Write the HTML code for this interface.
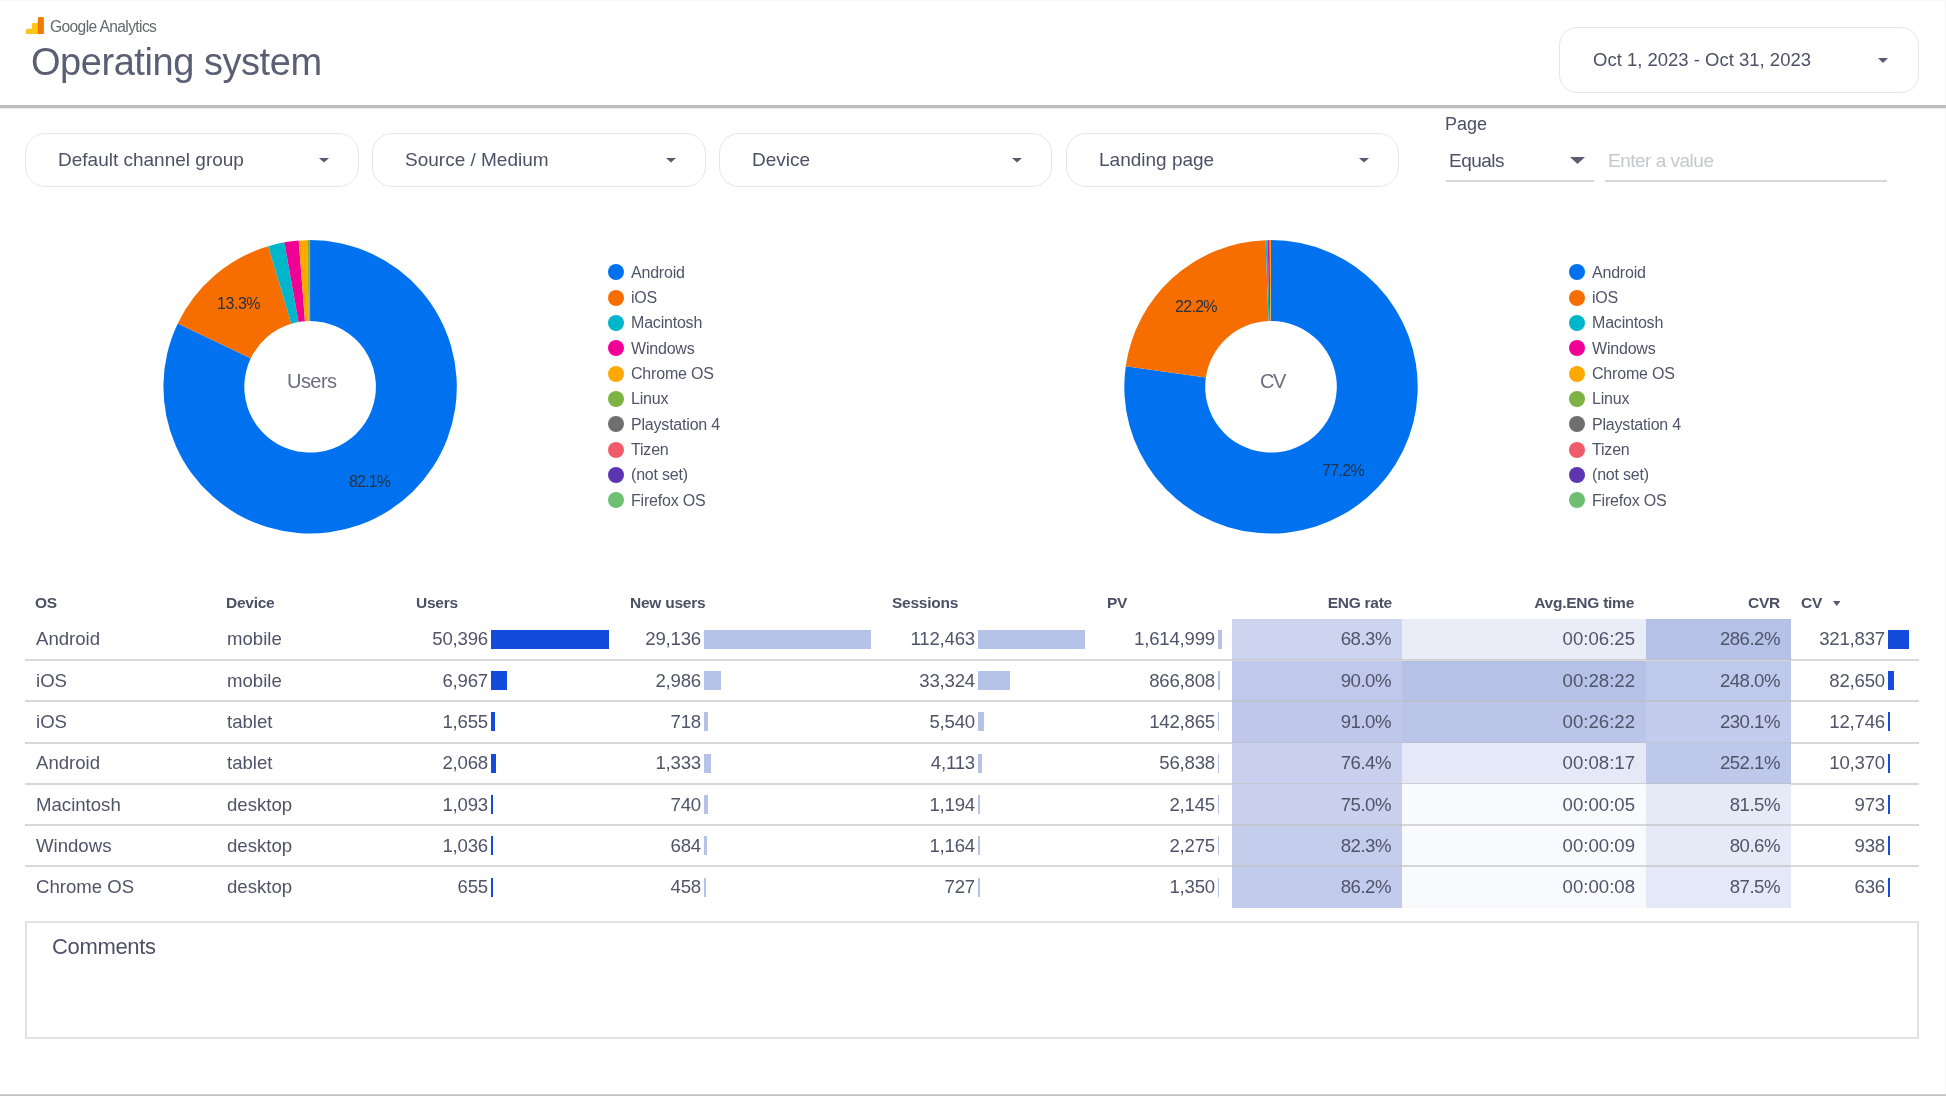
<!DOCTYPE html>
<html><head><meta charset="utf-8"><style>
html,body{margin:0;padding:0;background:#fff;width:1946px;height:1096px;overflow:hidden}
body{position:relative;font-family:"Liberation Sans", sans-serif}
.t{position:absolute;white-space:nowrap;-webkit-font-smoothing:antialiased;will-change:transform}
.r{position:absolute;display:block}
</style></head><body>
<div class="r" style="left:0.00px;top:0.00px;width:1946.00px;height:1.00px;background:#f8f8f8"></div>
<div class="r" style="left:1945.00px;top:0.00px;width:1.00px;height:1096.00px;background:#f6f6f6"></div>
<div class="r" style="left:0.00px;top:1093.50px;width:1946.00px;height:2.50px;background:linear-gradient(#d8d8d8,#bababa)"></div>
<svg class="r" style="left:26px;top:16.75px;width:18px;height:17.6px" viewBox="0 0 18 17.6">
<rect x="0" y="11.65" width="7.5" height="5.95" rx="1.5" fill="#fdc11b"/>
<rect x="5.9" y="5.95" width="7" height="11.65" rx="0.8" fill="#fdc515"/>
<rect x="11.9" y="0" width="6" height="17.6" rx="1.5" fill="#f57c00"/>
<rect x="11.9" y="3" width="1.6" height="14.6" fill="#ea730a"/>
</svg>
<div class="t" style="left:49.80px;top:18.99px;font-size:15.6px;line-height:15.6px;color:#65686c;font-weight:400;letter-spacing:-0.62px">Google Analytics</div>
<div class="t" style="left:31.00px;top:42.83px;font-size:38px;line-height:38px;color:#5b5f73;font-weight:400;letter-spacing:-0.45px">Operating system</div>
<div class="r" style="left:0.00px;top:105.00px;width:1946.00px;height:2.60px;background:#bdbdbd;box-shadow:0 1px 1px rgba(0,0,0,0.08)"></div>
<div class="r" style="left:1559.20px;top:26.70px;width:359.60px;height:66.40px;border:1.8px solid #e6e6e8;border-radius:18px;box-sizing:border-box"></div>
<div class="t" style="left:1593.00px;top:50.84px;font-size:18.5px;line-height:18.5px;color:#4d5166;font-weight:400;">Oct 1, 2023 - Oct 31, 2023</div>
<svg class="r" style="left:1878.00px;top:58.00px;width:10px;height:5px" viewBox="0 0 10 5"><path d="M0 0L10 0L5.0 5Z" fill="#555a6e"/></svg>
<div class="r" style="left:25.20px;top:133.20px;width:334.00px;height:53.80px;border:1.8px solid #e6e6e8;border-radius:20px;box-sizing:border-box"></div>
<div class="t" style="left:57.80px;top:150.42px;font-size:19px;line-height:19px;color:#4d5166;font-weight:400;">Default channel group</div>
<svg class="r" style="left:318.90px;top:158.00px;width:10px;height:4.6px" viewBox="0 0 10 4.6"><path d="M0 0L10 0L5.0 4.6Z" fill="#555a6e"/></svg>
<div class="r" style="left:372.00px;top:133.20px;width:334.00px;height:53.80px;border:1.8px solid #e6e6e8;border-radius:20px;box-sizing:border-box"></div>
<div class="t" style="left:404.60px;top:150.42px;font-size:19px;line-height:19px;color:#4d5166;font-weight:400;">Source / Medium</div>
<svg class="r" style="left:665.70px;top:158.00px;width:10px;height:4.6px" viewBox="0 0 10 4.6"><path d="M0 0L10 0L5.0 4.6Z" fill="#555a6e"/></svg>
<div class="r" style="left:719.20px;top:133.20px;width:332.80px;height:53.80px;border:1.8px solid #e6e6e8;border-radius:20px;box-sizing:border-box"></div>
<div class="t" style="left:751.80px;top:150.42px;font-size:19px;line-height:19px;color:#4d5166;font-weight:400;">Device</div>
<svg class="r" style="left:1011.70px;top:158.00px;width:10px;height:4.6px" viewBox="0 0 10 4.6"><path d="M0 0L10 0L5.0 4.6Z" fill="#555a6e"/></svg>
<div class="r" style="left:1066.00px;top:133.20px;width:333.00px;height:53.80px;border:1.8px solid #e6e6e8;border-radius:20px;box-sizing:border-box"></div>
<div class="t" style="left:1098.60px;top:150.42px;font-size:19px;line-height:19px;color:#4d5166;font-weight:400;">Landing page</div>
<svg class="r" style="left:1358.70px;top:158.00px;width:10px;height:4.6px" viewBox="0 0 10 4.6"><path d="M0 0L10 0L5.0 4.6Z" fill="#555a6e"/></svg>
<div class="t" style="left:1444.90px;top:114.86px;font-size:18px;line-height:18px;color:#4d5166;font-weight:400;">Page</div>
<div class="t" style="left:1448.80px;top:151.42px;font-size:19px;line-height:19px;color:#4d5166;font-weight:400;letter-spacing:-0.5px">Equals</div>
<div class="r" style="left:1445.80px;top:180.00px;width:148.20px;height:1.80px;background:#d6d7dd"></div>
<svg class="r" style="left:1569.70px;top:157.00px;width:15px;height:7px" viewBox="0 0 15 7"><path d="M0 0L15 0L7.5 7Z" fill="#5a5e70"/></svg>
<div class="t" style="left:1608.00px;top:151.32px;font-size:19px;line-height:19px;color:#c6c7cf;font-weight:400;letter-spacing:-0.5px">Enter a value</div>
<div class="r" style="left:1605.00px;top:180.00px;width:281.60px;height:1.80px;background:#d6d7dd"></div>
<svg class="r" style="left:0;top:0;width:1946px;height:1096px" viewBox="0 0 1946 1096"><path d="M310.100 240.100A146.7 146.7 0 1 1 177.801 323.413L250.759 358.369A65.8 65.8 0 1 0 310.100 321.000Z" fill="#0072f0"/><path d="M177.801 323.413A146.7 146.7 0 0 1 268.190 246.214L291.302 323.742A65.8 65.8 0 0 0 250.759 358.369Z" fill="#f66d00"/><path d="M268.190 246.214A146.7 146.7 0 0 1 284.374 242.373L298.561 322.020A65.8 65.8 0 0 0 291.302 323.742Z" fill="#00b6cb"/><path d="M284.374 242.373A146.7 146.7 0 0 1 298.718 240.542L304.995 321.198A65.8 65.8 0 0 0 298.561 322.020Z" fill="#f10096"/><path d="M298.718 240.542A146.7 146.7 0 0 1 307.156 240.130L308.779 321.013A65.8 65.8 0 0 0 304.995 321.198Z" fill="#ffa800"/><path d="M307.156 240.130A146.7 146.7 0 0 1 309.076 240.104L309.641 321.002A65.8 65.8 0 0 0 308.779 321.013Z" fill="#7cb342"/><path d="M309.076 240.104A146.7 146.7 0 0 1 309.716 240.101L309.928 321.000A65.8 65.8 0 0 0 309.641 321.002Z" fill="#6f6f6f"/><path d="M309.716 240.101A146.7 146.7 0 0 1 309.972 240.100L310.043 321.000A65.8 65.8 0 0 0 309.928 321.000Z" fill="#ef5b6a"/><path d="M309.972 240.100A146.7 146.7 0 0 1 310.100 240.100L310.100 321.000A65.8 65.8 0 0 0 310.043 321.000Z" fill="#5e35b1"/></svg>
<svg class="r" style="left:0;top:0;width:1946px;height:1096px" viewBox="0 0 1946 1096"><path d="M1271.000 240.100A146.7 146.7 0 1 1 1125.736 366.326L1205.844 377.617A65.8 65.8 0 1 0 1271.000 321.000Z" fill="#0072f0"/><path d="M1125.736 366.326A146.7 146.7 0 0 1 1265.545 240.201L1268.553 321.046A65.8 65.8 0 0 0 1205.844 377.617Z" fill="#f66d00"/><path d="M1265.545 240.201A146.7 146.7 0 0 1 1267.627 240.139L1269.487 321.017A65.8 65.8 0 0 0 1268.553 321.046Z" fill="#00b6cb"/><path d="M1267.627 240.139A146.7 146.7 0 0 1 1269.636 240.106L1270.388 321.003A65.8 65.8 0 0 0 1269.487 321.017Z" fill="#f10096"/><path d="M1269.636 240.106A146.7 146.7 0 0 1 1271.000 240.100L1271.000 321.000A65.8 65.8 0 0 0 1270.388 321.003Z" fill="#ffa800"/></svg>
<div class="t" style="left:216.60px;top:295.76px;font-size:16px;line-height:16px;color:#263147;font-weight:400;letter-spacing:-0.45px">13.3%</div>
<div class="t" style="left:349.40px;top:473.86px;font-size:16px;line-height:16px;color:#263147;font-weight:400;letter-spacing:-0.85px">82.1%</div>
<div class="t" style="left:1174.80px;top:298.76px;font-size:16px;line-height:16px;color:#263147;font-weight:400;letter-spacing:-0.7px">22.2%</div>
<div class="t" style="left:1322.20px;top:462.66px;font-size:16px;line-height:16px;color:#263147;font-weight:400;letter-spacing:-0.65px">77.2%</div>
<div class="t" style="left:286.60px;top:371.47px;font-size:20px;line-height:20px;color:#6b6e7f;font-weight:400;letter-spacing:-0.55px">Users</div>
<div class="t" style="left:1259.50px;top:371.47px;font-size:20px;line-height:20px;color:#6b6e7f;font-weight:400;letter-spacing:-1.5px">CV</div>
<div class="r" style="left:607.90px;top:264.20px;width:16.00px;height:16.00px;background:#0072f0;border-radius:50%"></div>
<div class="t" style="left:631.00px;top:264.56px;font-size:16px;line-height:16px;color:#505469;font-weight:400;letter-spacing:-0.2px">Android</div>
<div class="r" style="left:607.90px;top:289.53px;width:16.00px;height:16.00px;background:#f66d00;border-radius:50%"></div>
<div class="t" style="left:631.00px;top:289.89px;font-size:16px;line-height:16px;color:#505469;font-weight:400;letter-spacing:-0.2px">iOS</div>
<div class="r" style="left:607.90px;top:314.86px;width:16.00px;height:16.00px;background:#00b6cb;border-radius:50%"></div>
<div class="t" style="left:631.00px;top:315.22px;font-size:16px;line-height:16px;color:#505469;font-weight:400;letter-spacing:-0.2px">Macintosh</div>
<div class="r" style="left:607.90px;top:340.19px;width:16.00px;height:16.00px;background:#f10096;border-radius:50%"></div>
<div class="t" style="left:631.00px;top:340.55px;font-size:16px;line-height:16px;color:#505469;font-weight:400;letter-spacing:-0.2px">Windows</div>
<div class="r" style="left:607.90px;top:365.52px;width:16.00px;height:16.00px;background:#ffa800;border-radius:50%"></div>
<div class="t" style="left:631.00px;top:365.88px;font-size:16px;line-height:16px;color:#505469;font-weight:400;letter-spacing:-0.2px">Chrome OS</div>
<div class="r" style="left:607.90px;top:390.85px;width:16.00px;height:16.00px;background:#7cb342;border-radius:50%"></div>
<div class="t" style="left:631.00px;top:391.21px;font-size:16px;line-height:16px;color:#505469;font-weight:400;letter-spacing:-0.2px">Linux</div>
<div class="r" style="left:607.90px;top:416.18px;width:16.00px;height:16.00px;background:#6f6f6f;border-radius:50%"></div>
<div class="t" style="left:631.00px;top:416.54px;font-size:16px;line-height:16px;color:#505469;font-weight:400;letter-spacing:-0.2px">Playstation 4</div>
<div class="r" style="left:607.90px;top:441.51px;width:16.00px;height:16.00px;background:#ef5b6a;border-radius:50%"></div>
<div class="t" style="left:631.00px;top:441.87px;font-size:16px;line-height:16px;color:#505469;font-weight:400;letter-spacing:-0.2px">Tizen</div>
<div class="r" style="left:607.90px;top:466.84px;width:16.00px;height:16.00px;background:#5e35b1;border-radius:50%"></div>
<div class="t" style="left:631.00px;top:467.20px;font-size:16px;line-height:16px;color:#505469;font-weight:400;letter-spacing:-0.2px">(not set)</div>
<div class="r" style="left:607.90px;top:492.17px;width:16.00px;height:16.00px;background:#6fbf73;border-radius:50%"></div>
<div class="t" style="left:631.00px;top:492.53px;font-size:16px;line-height:16px;color:#505469;font-weight:400;letter-spacing:-0.2px">Firefox OS</div>
<div class="r" style="left:1568.60px;top:264.20px;width:16.00px;height:16.00px;background:#0072f0;border-radius:50%"></div>
<div class="t" style="left:1591.70px;top:264.56px;font-size:16px;line-height:16px;color:#505469;font-weight:400;letter-spacing:-0.2px">Android</div>
<div class="r" style="left:1568.60px;top:289.53px;width:16.00px;height:16.00px;background:#f66d00;border-radius:50%"></div>
<div class="t" style="left:1591.70px;top:289.89px;font-size:16px;line-height:16px;color:#505469;font-weight:400;letter-spacing:-0.2px">iOS</div>
<div class="r" style="left:1568.60px;top:314.86px;width:16.00px;height:16.00px;background:#00b6cb;border-radius:50%"></div>
<div class="t" style="left:1591.70px;top:315.22px;font-size:16px;line-height:16px;color:#505469;font-weight:400;letter-spacing:-0.2px">Macintosh</div>
<div class="r" style="left:1568.60px;top:340.19px;width:16.00px;height:16.00px;background:#f10096;border-radius:50%"></div>
<div class="t" style="left:1591.70px;top:340.55px;font-size:16px;line-height:16px;color:#505469;font-weight:400;letter-spacing:-0.2px">Windows</div>
<div class="r" style="left:1568.60px;top:365.52px;width:16.00px;height:16.00px;background:#ffa800;border-radius:50%"></div>
<div class="t" style="left:1591.70px;top:365.88px;font-size:16px;line-height:16px;color:#505469;font-weight:400;letter-spacing:-0.2px">Chrome OS</div>
<div class="r" style="left:1568.60px;top:390.85px;width:16.00px;height:16.00px;background:#7cb342;border-radius:50%"></div>
<div class="t" style="left:1591.70px;top:391.21px;font-size:16px;line-height:16px;color:#505469;font-weight:400;letter-spacing:-0.2px">Linux</div>
<div class="r" style="left:1568.60px;top:416.18px;width:16.00px;height:16.00px;background:#6f6f6f;border-radius:50%"></div>
<div class="t" style="left:1591.70px;top:416.54px;font-size:16px;line-height:16px;color:#505469;font-weight:400;letter-spacing:-0.2px">Playstation 4</div>
<div class="r" style="left:1568.60px;top:441.51px;width:16.00px;height:16.00px;background:#ef5b6a;border-radius:50%"></div>
<div class="t" style="left:1591.70px;top:441.87px;font-size:16px;line-height:16px;color:#505469;font-weight:400;letter-spacing:-0.2px">Tizen</div>
<div class="r" style="left:1568.60px;top:466.84px;width:16.00px;height:16.00px;background:#5e35b1;border-radius:50%"></div>
<div class="t" style="left:1591.70px;top:467.20px;font-size:16px;line-height:16px;color:#505469;font-weight:400;letter-spacing:-0.2px">(not set)</div>
<div class="r" style="left:1568.60px;top:492.17px;width:16.00px;height:16.00px;background:#6fbf73;border-radius:50%"></div>
<div class="t" style="left:1591.70px;top:492.53px;font-size:16px;line-height:16px;color:#505469;font-weight:400;letter-spacing:-0.2px">Firefox OS</div>
<div class="t" style="left:35.40px;top:595.28px;font-size:15.5px;line-height:15.5px;color:#4c5064;font-weight:700;letter-spacing:-0.25px">OS</div>
<div class="t" style="left:226.00px;top:595.28px;font-size:15.5px;line-height:15.5px;color:#4c5064;font-weight:700;letter-spacing:-0.25px">Device</div>
<div class="t" style="left:416.20px;top:595.28px;font-size:15.5px;line-height:15.5px;color:#4c5064;font-weight:700;letter-spacing:-0.25px">Users</div>
<div class="t" style="left:629.60px;top:595.28px;font-size:15.5px;line-height:15.5px;color:#4c5064;font-weight:700;letter-spacing:-0.25px">New users</div>
<div class="t" style="left:891.90px;top:595.28px;font-size:15.5px;line-height:15.5px;color:#4c5064;font-weight:700;letter-spacing:-0.25px">Sessions</div>
<div class="t" style="left:1106.80px;top:595.28px;font-size:15.5px;line-height:15.5px;color:#4c5064;font-weight:700;letter-spacing:-0.25px">PV</div>
<div class="t" style="left:591.55px;width:800px;text-align:right;top:595.28px;font-size:15.5px;line-height:15.5px;color:#4c5064;font-weight:700;letter-spacing:-0.25px">ENG rate</div>
<div class="t" style="left:834.45px;width:800px;text-align:right;top:595.28px;font-size:15.5px;line-height:15.5px;color:#4c5064;font-weight:700;letter-spacing:-0.25px">Avg.ENG time</div>
<div class="t" style="left:980.25px;width:800px;text-align:right;top:595.28px;font-size:15.5px;line-height:15.5px;color:#4c5064;font-weight:700;letter-spacing:-0.25px">CVR</div>
<div class="t" style="left:1801.20px;top:595.28px;font-size:15.5px;line-height:15.5px;color:#4c5064;font-weight:700;letter-spacing:-0.25px">CV</div>
<svg class="r" style="left:1832.95px;top:600.70px;width:7.5px;height:5px" viewBox="0 0 7.5 5"><path d="M0 0L7.5 0L3.75 5Z" fill="#555a6e"/></svg>
<div class="r" style="left:1232.40px;top:619.20px;width:169.60px;height:41.30px;background:rgb(205,212,239)"></div>
<div class="r" style="left:1402.00px;top:619.20px;width:243.70px;height:41.30px;background:rgb(234,237,248)"></div>
<div class="r" style="left:1645.70px;top:619.20px;width:145.40px;height:41.30px;background:rgb(182,193,232)"></div>
<div class="r" style="left:25.00px;top:658.90px;width:1894.00px;height:2.00px;background:rgba(190,190,190,0.6)"></div>
<div class="t" style="left:36.00px;top:630.46px;font-size:18.6px;line-height:18.6px;color:#505468;font-weight:400;">Android</div>
<div class="t" style="left:226.80px;top:630.46px;font-size:18.6px;line-height:18.6px;color:#505468;font-weight:400;">mobile</div>
<div class="t" style="left:-312.20px;width:800px;text-align:right;top:630.46px;font-size:18.6px;line-height:18.6px;color:#505468;font-weight:400;letter-spacing:-0.2px">50,396</div>
<div class="t" style="left:-99.10px;width:800px;text-align:right;top:630.46px;font-size:18.6px;line-height:18.6px;color:#505468;font-weight:400;letter-spacing:-0.2px">29,136</div>
<div class="t" style="left:175.30px;width:800px;text-align:right;top:630.46px;font-size:18.6px;line-height:18.6px;color:#505468;font-weight:400;letter-spacing:-0.2px">112,463</div>
<div class="t" style="left:415.10px;width:800px;text-align:right;top:630.46px;font-size:18.6px;line-height:18.6px;color:#505468;font-weight:400;letter-spacing:-0.2px">1,614,999</div>
<div class="t" style="left:590.50px;width:800px;text-align:right;top:630.46px;font-size:18.6px;line-height:18.6px;color:#505468;font-weight:400;letter-spacing:-0.5px">68.3%</div>
<div class="t" style="left:834.70px;width:800px;text-align:right;top:630.46px;font-size:18.6px;line-height:18.6px;color:#505468;font-weight:400;">00:06:25</div>
<div class="t" style="left:980.00px;width:800px;text-align:right;top:630.46px;font-size:18.6px;line-height:18.6px;color:#505468;font-weight:400;letter-spacing:-0.5px">286.2%</div>
<div class="t" style="left:1085.30px;width:800px;text-align:right;top:630.46px;font-size:18.6px;line-height:18.6px;color:#505468;font-weight:400;letter-spacing:-0.2px">321,837</div>
<div class="r" style="left:490.80px;top:629.70px;width:118.00px;height:19.00px;background:#134bdc"></div>
<div class="r" style="left:703.50px;top:629.70px;width:167.20px;height:19.00px;background:#b5c3e9"></div>
<div class="r" style="left:978.30px;top:629.70px;width:106.80px;height:19.00px;background:#b5c3e9"></div>
<div class="r" style="left:1217.50px;top:629.70px;width:4.30px;height:19.00px;background:#b5c3e9"></div>
<div class="r" style="left:1888.30px;top:629.70px;width:20.50px;height:19.00px;background:#134bdc"></div>
<div class="r" style="left:1232.40px;top:660.50px;width:169.60px;height:41.30px;background:rgb(192,201,235)"></div>
<div class="r" style="left:1402.00px;top:660.50px;width:243.70px;height:41.30px;background:rgb(182,193,232)"></div>
<div class="r" style="left:1645.70px;top:660.50px;width:145.40px;height:41.30px;background:rgb(191,201,235)"></div>
<div class="r" style="left:25.00px;top:700.20px;width:1894.00px;height:2.00px;background:rgba(190,190,190,0.6)"></div>
<div class="t" style="left:36.00px;top:671.76px;font-size:18.6px;line-height:18.6px;color:#505468;font-weight:400;">iOS</div>
<div class="t" style="left:226.80px;top:671.76px;font-size:18.6px;line-height:18.6px;color:#505468;font-weight:400;">mobile</div>
<div class="t" style="left:-312.20px;width:800px;text-align:right;top:671.76px;font-size:18.6px;line-height:18.6px;color:#505468;font-weight:400;letter-spacing:-0.2px">6,967</div>
<div class="t" style="left:-99.10px;width:800px;text-align:right;top:671.76px;font-size:18.6px;line-height:18.6px;color:#505468;font-weight:400;letter-spacing:-0.2px">2,986</div>
<div class="t" style="left:175.30px;width:800px;text-align:right;top:671.76px;font-size:18.6px;line-height:18.6px;color:#505468;font-weight:400;letter-spacing:-0.2px">33,324</div>
<div class="t" style="left:415.10px;width:800px;text-align:right;top:671.76px;font-size:18.6px;line-height:18.6px;color:#505468;font-weight:400;letter-spacing:-0.2px">866,808</div>
<div class="t" style="left:590.50px;width:800px;text-align:right;top:671.76px;font-size:18.6px;line-height:18.6px;color:#505468;font-weight:400;letter-spacing:-0.5px">90.0%</div>
<div class="t" style="left:834.70px;width:800px;text-align:right;top:671.76px;font-size:18.6px;line-height:18.6px;color:#505468;font-weight:400;">00:28:22</div>
<div class="t" style="left:980.00px;width:800px;text-align:right;top:671.76px;font-size:18.6px;line-height:18.6px;color:#505468;font-weight:400;letter-spacing:-0.5px">248.0%</div>
<div class="t" style="left:1085.30px;width:800px;text-align:right;top:671.76px;font-size:18.6px;line-height:18.6px;color:#505468;font-weight:400;letter-spacing:-0.2px">82,650</div>
<div class="r" style="left:490.80px;top:671.00px;width:16.31px;height:19.00px;background:#134bdc"></div>
<div class="r" style="left:703.50px;top:671.00px;width:17.14px;height:19.00px;background:#b5c3e9"></div>
<div class="r" style="left:978.30px;top:671.00px;width:31.65px;height:19.00px;background:#b5c3e9"></div>
<div class="r" style="left:1217.50px;top:671.00px;width:2.31px;height:19.00px;background:#b5c3e9"></div>
<div class="r" style="left:1888.30px;top:671.00px;width:5.26px;height:19.00px;background:#134bdc"></div>
<div class="r" style="left:1232.40px;top:701.80px;width:169.60px;height:41.30px;background:rgb(191,200,235)"></div>
<div class="r" style="left:1402.00px;top:701.80px;width:243.70px;height:41.30px;background:rgb(187,197,233)"></div>
<div class="r" style="left:1645.70px;top:701.80px;width:145.40px;height:41.30px;background:rgb(195,204,236)"></div>
<div class="r" style="left:25.00px;top:741.50px;width:1894.00px;height:2.00px;background:rgba(190,190,190,0.6)"></div>
<div class="t" style="left:36.00px;top:713.06px;font-size:18.6px;line-height:18.6px;color:#505468;font-weight:400;">iOS</div>
<div class="t" style="left:226.80px;top:713.06px;font-size:18.6px;line-height:18.6px;color:#505468;font-weight:400;">tablet</div>
<div class="t" style="left:-312.20px;width:800px;text-align:right;top:713.06px;font-size:18.6px;line-height:18.6px;color:#505468;font-weight:400;letter-spacing:-0.2px">1,655</div>
<div class="t" style="left:-99.10px;width:800px;text-align:right;top:713.06px;font-size:18.6px;line-height:18.6px;color:#505468;font-weight:400;letter-spacing:-0.2px">718</div>
<div class="t" style="left:175.30px;width:800px;text-align:right;top:713.06px;font-size:18.6px;line-height:18.6px;color:#505468;font-weight:400;letter-spacing:-0.2px">5,540</div>
<div class="t" style="left:415.10px;width:800px;text-align:right;top:713.06px;font-size:18.6px;line-height:18.6px;color:#505468;font-weight:400;letter-spacing:-0.2px">142,865</div>
<div class="t" style="left:590.50px;width:800px;text-align:right;top:713.06px;font-size:18.6px;line-height:18.6px;color:#505468;font-weight:400;letter-spacing:-0.5px">91.0%</div>
<div class="t" style="left:834.70px;width:800px;text-align:right;top:713.06px;font-size:18.6px;line-height:18.6px;color:#505468;font-weight:400;">00:26:22</div>
<div class="t" style="left:980.00px;width:800px;text-align:right;top:713.06px;font-size:18.6px;line-height:18.6px;color:#505468;font-weight:400;letter-spacing:-0.5px">230.1%</div>
<div class="t" style="left:1085.30px;width:800px;text-align:right;top:713.06px;font-size:18.6px;line-height:18.6px;color:#505468;font-weight:400;letter-spacing:-0.2px">12,746</div>
<div class="r" style="left:490.80px;top:712.30px;width:3.88px;height:19.00px;background:#134bdc"></div>
<div class="r" style="left:703.50px;top:712.30px;width:4.12px;height:19.00px;background:#b5c3e9"></div>
<div class="r" style="left:978.30px;top:712.30px;width:5.26px;height:19.00px;background:#b5c3e9"></div>
<div class="r" style="left:1217.50px;top:712.30px;width:1.20px;height:19.00px;background:#b5c3e9"></div>
<div class="r" style="left:1888.30px;top:712.30px;width:2.00px;height:19.00px;background:#134bdc"></div>
<div class="r" style="left:1232.40px;top:743.10px;width:169.60px;height:41.30px;background:rgb(200,208,238)"></div>
<div class="r" style="left:1402.00px;top:743.10px;width:243.70px;height:41.30px;background:rgb(229,233,247)"></div>
<div class="r" style="left:1645.70px;top:743.10px;width:145.40px;height:41.30px;background:rgb(190,200,235)"></div>
<div class="r" style="left:25.00px;top:782.80px;width:1894.00px;height:2.00px;background:rgba(190,190,190,0.6)"></div>
<div class="t" style="left:36.00px;top:754.36px;font-size:18.6px;line-height:18.6px;color:#505468;font-weight:400;">Android</div>
<div class="t" style="left:226.80px;top:754.36px;font-size:18.6px;line-height:18.6px;color:#505468;font-weight:400;">tablet</div>
<div class="t" style="left:-312.20px;width:800px;text-align:right;top:754.36px;font-size:18.6px;line-height:18.6px;color:#505468;font-weight:400;letter-spacing:-0.2px">2,068</div>
<div class="t" style="left:-99.10px;width:800px;text-align:right;top:754.36px;font-size:18.6px;line-height:18.6px;color:#505468;font-weight:400;letter-spacing:-0.2px">1,333</div>
<div class="t" style="left:175.30px;width:800px;text-align:right;top:754.36px;font-size:18.6px;line-height:18.6px;color:#505468;font-weight:400;letter-spacing:-0.2px">4,113</div>
<div class="t" style="left:415.10px;width:800px;text-align:right;top:754.36px;font-size:18.6px;line-height:18.6px;color:#505468;font-weight:400;letter-spacing:-0.2px">56,838</div>
<div class="t" style="left:590.50px;width:800px;text-align:right;top:754.36px;font-size:18.6px;line-height:18.6px;color:#505468;font-weight:400;letter-spacing:-0.5px">76.4%</div>
<div class="t" style="left:834.70px;width:800px;text-align:right;top:754.36px;font-size:18.6px;line-height:18.6px;color:#505468;font-weight:400;">00:08:17</div>
<div class="t" style="left:980.00px;width:800px;text-align:right;top:754.36px;font-size:18.6px;line-height:18.6px;color:#505468;font-weight:400;letter-spacing:-0.5px">252.1%</div>
<div class="t" style="left:1085.30px;width:800px;text-align:right;top:754.36px;font-size:18.6px;line-height:18.6px;color:#505468;font-weight:400;letter-spacing:-0.2px">10,370</div>
<div class="r" style="left:490.80px;top:753.60px;width:4.84px;height:19.00px;background:#134bdc"></div>
<div class="r" style="left:703.50px;top:753.60px;width:7.65px;height:19.00px;background:#b5c3e9"></div>
<div class="r" style="left:978.30px;top:753.60px;width:3.91px;height:19.00px;background:#b5c3e9"></div>
<div class="r" style="left:1217.50px;top:753.60px;width:1.20px;height:19.00px;background:#b5c3e9"></div>
<div class="r" style="left:1888.30px;top:753.60px;width:2.00px;height:19.00px;background:#134bdc"></div>
<div class="r" style="left:1232.40px;top:784.40px;width:169.60px;height:41.30px;background:rgb(201,209,238)"></div>
<div class="r" style="left:1402.00px;top:784.40px;width:243.70px;height:41.30px;background:rgb(249,250,253)"></div>
<div class="r" style="left:1645.70px;top:784.40px;width:145.40px;height:41.30px;background:rgb(230,234,247)"></div>
<div class="r" style="left:25.00px;top:824.10px;width:1894.00px;height:2.00px;background:rgba(190,190,190,0.6)"></div>
<div class="t" style="left:36.00px;top:795.66px;font-size:18.6px;line-height:18.6px;color:#505468;font-weight:400;">Macintosh</div>
<div class="t" style="left:226.80px;top:795.66px;font-size:18.6px;line-height:18.6px;color:#505468;font-weight:400;">desktop</div>
<div class="t" style="left:-312.20px;width:800px;text-align:right;top:795.66px;font-size:18.6px;line-height:18.6px;color:#505468;font-weight:400;letter-spacing:-0.2px">1,093</div>
<div class="t" style="left:-99.10px;width:800px;text-align:right;top:795.66px;font-size:18.6px;line-height:18.6px;color:#505468;font-weight:400;letter-spacing:-0.2px">740</div>
<div class="t" style="left:175.30px;width:800px;text-align:right;top:795.66px;font-size:18.6px;line-height:18.6px;color:#505468;font-weight:400;letter-spacing:-0.2px">1,194</div>
<div class="t" style="left:415.10px;width:800px;text-align:right;top:795.66px;font-size:18.6px;line-height:18.6px;color:#505468;font-weight:400;letter-spacing:-0.2px">2,145</div>
<div class="t" style="left:590.50px;width:800px;text-align:right;top:795.66px;font-size:18.6px;line-height:18.6px;color:#505468;font-weight:400;letter-spacing:-0.5px">75.0%</div>
<div class="t" style="left:834.70px;width:800px;text-align:right;top:795.66px;font-size:18.6px;line-height:18.6px;color:#505468;font-weight:400;">00:00:05</div>
<div class="t" style="left:980.00px;width:800px;text-align:right;top:795.66px;font-size:18.6px;line-height:18.6px;color:#505468;font-weight:400;letter-spacing:-0.5px">81.5%</div>
<div class="t" style="left:1085.30px;width:800px;text-align:right;top:795.66px;font-size:18.6px;line-height:18.6px;color:#505468;font-weight:400;letter-spacing:-0.2px">973</div>
<div class="r" style="left:490.80px;top:794.90px;width:2.56px;height:19.00px;background:#134bdc"></div>
<div class="r" style="left:703.50px;top:794.90px;width:4.25px;height:19.00px;background:#b5c3e9"></div>
<div class="r" style="left:978.30px;top:794.90px;width:2.00px;height:19.00px;background:#b5c3e9"></div>
<div class="r" style="left:1217.50px;top:794.90px;width:1.20px;height:19.00px;background:#b5c3e9"></div>
<div class="r" style="left:1888.30px;top:794.90px;width:2.00px;height:19.00px;background:#134bdc"></div>
<div class="r" style="left:1232.40px;top:825.70px;width:169.60px;height:41.30px;background:rgb(197,205,237)"></div>
<div class="r" style="left:1402.00px;top:825.70px;width:243.70px;height:41.30px;background:rgb(249,250,253)"></div>
<div class="r" style="left:1645.70px;top:825.70px;width:145.40px;height:41.30px;background:rgb(230,234,247)"></div>
<div class="r" style="left:25.00px;top:865.40px;width:1894.00px;height:2.00px;background:rgba(190,190,190,0.6)"></div>
<div class="t" style="left:36.00px;top:836.96px;font-size:18.6px;line-height:18.6px;color:#505468;font-weight:400;">Windows</div>
<div class="t" style="left:226.80px;top:836.96px;font-size:18.6px;line-height:18.6px;color:#505468;font-weight:400;">desktop</div>
<div class="t" style="left:-312.20px;width:800px;text-align:right;top:836.96px;font-size:18.6px;line-height:18.6px;color:#505468;font-weight:400;letter-spacing:-0.2px">1,036</div>
<div class="t" style="left:-99.10px;width:800px;text-align:right;top:836.96px;font-size:18.6px;line-height:18.6px;color:#505468;font-weight:400;letter-spacing:-0.2px">684</div>
<div class="t" style="left:175.30px;width:800px;text-align:right;top:836.96px;font-size:18.6px;line-height:18.6px;color:#505468;font-weight:400;letter-spacing:-0.2px">1,164</div>
<div class="t" style="left:415.10px;width:800px;text-align:right;top:836.96px;font-size:18.6px;line-height:18.6px;color:#505468;font-weight:400;letter-spacing:-0.2px">2,275</div>
<div class="t" style="left:590.50px;width:800px;text-align:right;top:836.96px;font-size:18.6px;line-height:18.6px;color:#505468;font-weight:400;letter-spacing:-0.5px">82.3%</div>
<div class="t" style="left:834.70px;width:800px;text-align:right;top:836.96px;font-size:18.6px;line-height:18.6px;color:#505468;font-weight:400;">00:00:09</div>
<div class="t" style="left:980.00px;width:800px;text-align:right;top:836.96px;font-size:18.6px;line-height:18.6px;color:#505468;font-weight:400;letter-spacing:-0.5px">80.6%</div>
<div class="t" style="left:1085.30px;width:800px;text-align:right;top:836.96px;font-size:18.6px;line-height:18.6px;color:#505468;font-weight:400;letter-spacing:-0.2px">938</div>
<div class="r" style="left:490.80px;top:836.20px;width:2.43px;height:19.00px;background:#134bdc"></div>
<div class="r" style="left:703.50px;top:836.20px;width:3.93px;height:19.00px;background:#b5c3e9"></div>
<div class="r" style="left:978.30px;top:836.20px;width:2.00px;height:19.00px;background:#b5c3e9"></div>
<div class="r" style="left:1217.50px;top:836.20px;width:1.20px;height:19.00px;background:#b5c3e9"></div>
<div class="r" style="left:1888.30px;top:836.20px;width:2.00px;height:19.00px;background:#134bdc"></div>
<div class="r" style="left:1232.40px;top:867.00px;width:169.60px;height:41.30px;background:rgb(194,203,236)"></div>
<div class="r" style="left:1402.00px;top:867.00px;width:243.70px;height:41.30px;background:rgb(249,250,253)"></div>
<div class="r" style="left:1645.70px;top:867.00px;width:145.40px;height:41.30px;background:rgb(229,233,247)"></div>
<div class="t" style="left:36.00px;top:878.26px;font-size:18.6px;line-height:18.6px;color:#505468;font-weight:400;">Chrome OS</div>
<div class="t" style="left:226.80px;top:878.26px;font-size:18.6px;line-height:18.6px;color:#505468;font-weight:400;">desktop</div>
<div class="t" style="left:-312.20px;width:800px;text-align:right;top:878.26px;font-size:18.6px;line-height:18.6px;color:#505468;font-weight:400;letter-spacing:-0.2px">655</div>
<div class="t" style="left:-99.10px;width:800px;text-align:right;top:878.26px;font-size:18.6px;line-height:18.6px;color:#505468;font-weight:400;letter-spacing:-0.2px">458</div>
<div class="t" style="left:175.30px;width:800px;text-align:right;top:878.26px;font-size:18.6px;line-height:18.6px;color:#505468;font-weight:400;letter-spacing:-0.2px">727</div>
<div class="t" style="left:415.10px;width:800px;text-align:right;top:878.26px;font-size:18.6px;line-height:18.6px;color:#505468;font-weight:400;letter-spacing:-0.2px">1,350</div>
<div class="t" style="left:590.50px;width:800px;text-align:right;top:878.26px;font-size:18.6px;line-height:18.6px;color:#505468;font-weight:400;letter-spacing:-0.5px">86.2%</div>
<div class="t" style="left:834.70px;width:800px;text-align:right;top:878.26px;font-size:18.6px;line-height:18.6px;color:#505468;font-weight:400;">00:00:08</div>
<div class="t" style="left:980.00px;width:800px;text-align:right;top:878.26px;font-size:18.6px;line-height:18.6px;color:#505468;font-weight:400;letter-spacing:-0.5px">87.5%</div>
<div class="t" style="left:1085.30px;width:800px;text-align:right;top:878.26px;font-size:18.6px;line-height:18.6px;color:#505468;font-weight:400;letter-spacing:-0.2px">636</div>
<div class="r" style="left:490.80px;top:877.50px;width:2.00px;height:19.00px;background:#134bdc"></div>
<div class="r" style="left:703.50px;top:877.50px;width:2.63px;height:19.00px;background:#b5c3e9"></div>
<div class="r" style="left:978.30px;top:877.50px;width:2.00px;height:19.00px;background:#b5c3e9"></div>
<div class="r" style="left:1217.50px;top:877.50px;width:1.20px;height:19.00px;background:#b5c3e9"></div>
<div class="r" style="left:1888.30px;top:877.50px;width:2.00px;height:19.00px;background:#134bdc"></div>
<div class="r" style="left:25.00px;top:921.00px;width:1894.00px;height:118.00px;border:2px solid #e3e3e3;box-sizing:border-box"></div>
<div class="t" style="left:52.00px;top:935.68px;font-size:22px;line-height:22px;color:#4d5166;font-weight:400;letter-spacing:-0.35px">Comments</div>
</body></html>
